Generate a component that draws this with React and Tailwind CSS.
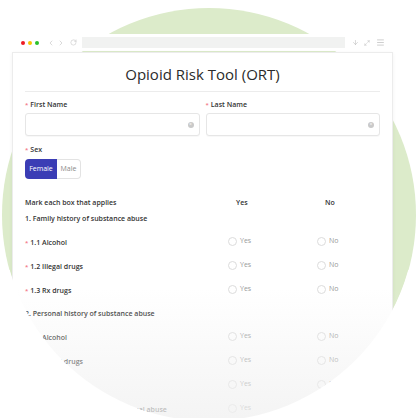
import React from "react";
import { ChevronLeft, ChevronRight, RotateCw, ArrowDown, Maximize2, Menu } from "lucide-react";

const sections = [
  {
    title: "1. Family history of substance abuse",
    head: "h-[16px]",
    rows: ["1.1 Alcohol", "1.2 Illegal drugs", "1.3 Rx drugs"],
  },
  {
    title: "2. Personal history of substance abuse",
    head: "h-[23px]",
    rows: ["2.1 Alcohol", "2.2 Illegal drugs", "2.3 Rx drugs", "3. History of preadolescent sexual abuse"],
  },
];

function Req({ children }) {
  return (
    <span className="flex items-center text-[7px] leading-[10px] font-semibold text-[#333]">
      <span className="text-[#f26d7d] mr-[2px] text-[6px]">*</span>
      {children}
    </span>
  );
}

function Field({ label }) {
  return (
    <div className="flex-1 flex flex-col">
      <Req>{label}</Req>
      <div className="mt-[3px] h-[23px] rounded-[3px] border border-[#e6e6e6] bg-white flex items-center justify-end pr-[5px] shadow-[0_1px_1px_rgba(0,0,0,0.03)]">
        <span className="w-[6px] h-[6px] rounded-full bg-[#c9c9c9] flex items-center justify-center text-white text-[5px] leading-none">×</span>
      </div>
    </div>
  );
}

function Option({ text, width }) {
  return (
    <div className={`${width} flex items-center pb-[4px]`}>
      <span className="w-[9px] h-[9px] rounded-full border border-[#dcdcdc] bg-white"></span>
      <span className="ml-[3px] text-[7px] text-[#9a9a9a]">{text}</span>
    </div>
  );
}

export default function App() {
  return (
    <div className="relative w-[418px] h-[418px] overflow-hidden bg-white font-['Open_Sans',sans-serif]">
      {/* green backdrop */}
      <div className="absolute left-[2px] top-[8px] w-[414px] h-[414px] rounded-full bg-[#dcebca]"></div>

      <div className="relative z-10 pt-[34px] pl-[12px]">
        <div className="w-[381px]">
          {/* browser bar */}
          <div className="h-[17px] bg-white flex items-center pl-[9px] pr-[8px]">
            <div className="flex gap-[3px]">
              <span className="w-[4px] h-[4px] rounded-full bg-[#ee1c24]"></span>
              <span className="w-[4px] h-[4px] rounded-full bg-[#f7c600]"></span>
              <span className="w-[4px] h-[4px] rounded-full bg-[#2bc12b]"></span>
            </div>
            <ChevronLeft size={8} strokeWidth={1.5} className="ml-[8px] text-[#b5b5b5]" />
            <ChevronRight size={8} strokeWidth={1.5} className="ml-[2px] text-[#b5b5b5]" />
            <RotateCw size={7} strokeWidth={1.5} className="ml-[5px] text-[#b5b5b5]" />
            <div className="ml-[5px] w-[265px] h-[11px] bg-[#f1f2f1]"></div>
            <ArrowDown size={7} strokeWidth={1.5} className="ml-[7px] text-[#a8a8a8]" />
            <Maximize2 size={6} strokeWidth={1.5} className="ml-[5px] text-[#a8a8a8]" />
            <Menu size={9} strokeWidth={1.5} className="ml-[6px] text-[#a8a8a8]" />
          </div>

          {/* page */}
          <div className="mt-[1px] h-[400px] bg-white border border-[#ececec] shadow-[0_1px_4px_rgba(0,0,0,0.05)] px-[12px]">
            <h1 className="mt-[11px] text-center text-[15px] leading-[20px] font-medium text-[#2b2b2b]">Opioid Risk Tool (ORT)</h1>
            <div className="mt-[7px] border-t border-[#ececec]"></div>

            <div className="mt-[8px] flex gap-[6px]">
              <Field label="First Name" />
              <Field label="Last Name" />
            </div>

            <div className="mt-[9px]">
              <Req>Sex</Req>
            </div>
            <div className="mt-[4px] flex">
              <span className="w-[32px] h-[20px] rounded-l-[4px] bg-[#3b3db5] text-white text-[7px] flex items-center justify-center">Female</span>
              <span className="w-[24px] h-[20px] rounded-r-[4px] border border-l-0 border-[#e3e3e3] text-[#8a8a8a] text-[7px] flex items-center justify-center">Male</span>
            </div>

            <div className="mt-[16px] h-[16px] flex items-center text-[7px] font-semibold text-[#333]">
              <span className="w-[203px]">Mark each box that applies</span>
              <span className="w-[89px] pl-[8px]">Yes</span>
              <span className="pl-[8px]">No</span>
            </div>

            {sections.map((sec, i) => (
              <div key={sec.title}>
                <div className={`${sec.head} flex items-center text-[7px] font-semibold text-[#333]`}>{sec.title}</div>
                {i === 0 && <div className="h-[4px]"></div>}
                {sec.rows.map((row) => (
                  <div key={row} className="h-[24px] flex items-center">
                    <div className="w-[203px]">
                      <Req>{row}</Req>
                    </div>
                    <Option text="Yes" width="w-[89px]" />
                    <Option text="No" width="flex-1" />
                  </div>
                ))}
              </div>
            ))}
          </div>
        </div>
      </div>

      {/* bottom fade, masked to the circle */}
      <div className="absolute left-0 top-[270px] w-full h-[148px] overflow-hidden z-20 pointer-events-none">
        <div className="absolute left-[2px] top-[-263px] w-[414px] h-[414px] rounded-full shadow-[0_0_0_400px_#ffffff] bg-[linear-gradient(to_bottom,transparent_68%,rgba(241,241,241,0.8)_100%)]"></div>
      </div>
    </div>
  );
}
